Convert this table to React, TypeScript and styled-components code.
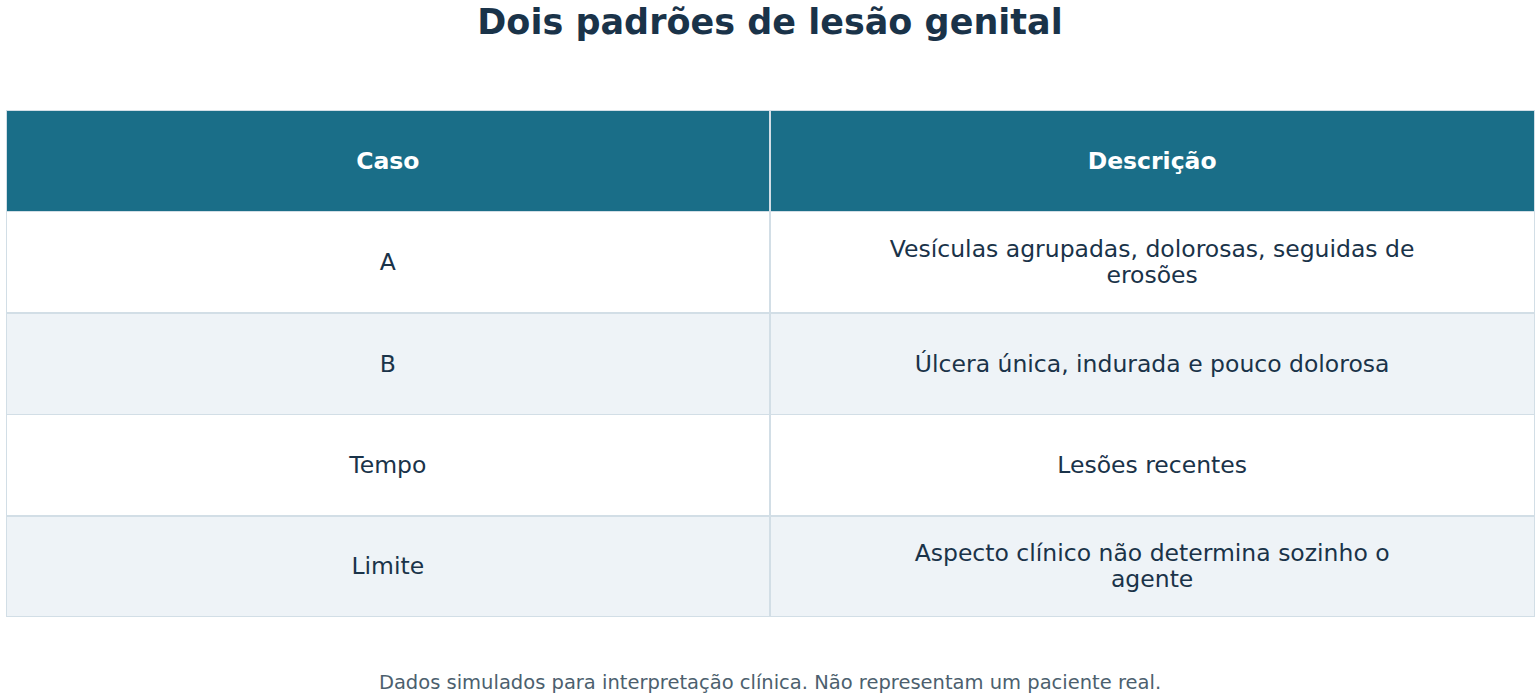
import { Fragment } from "react";
import styled, { createGlobalStyle } from "styled-components";

const GlobalStyle = createGlobalStyle`
  body {
    margin: 0;
    background: #fff;
    font-family: "DejaVu Sans", "Liberation Sans", sans-serif;
  }
`;

const Page = styled.div`
  width: 1540px;
  height: 700px;
  display: flex;
  flex-direction: column;
  align-items: center;
  overflow: hidden;
`;

const Title = styled.h1`
  margin: 2px 0 0;
  font-size: 35px;
  line-height: 40px;
  font-weight: bold;
  color: #1a3349;
`;

const Table = styled.div`
  margin-top: 68px;
  width: 1529px;
  display: grid;
  grid-template-columns: 1fr 1fr;
  grid-auto-rows: 99.8px;
  gap: 1.6px;
  padding: 1px;
  box-sizing: border-box;
  background: #d2dee6;
`;

const HeadCell = styled.div`
  background: #1a6e88;
  color: #fff;
  font-weight: bold;
  font-size: 23.5px;
  display: flex;
  align-items: center;
  justify-content: center;
  text-align: center;
`;

const Cell = styled.div<{ $alt: boolean }>`
  background: ${(p) => (p.$alt ? "#eef3f7" : "#ffffff")};
  color: #1a3349;
  font-size: 23.5px;
  line-height: 26px;
  display: flex;
  align-items: center;
  justify-content: center;
  text-align: center;
`;

const CellText = styled.span`
  max-width: 540px;
`;

const Note = styled.p`
  margin: 54px 0 0;
  font-size: 19.5px;
  color: #4c5f6e;
`;

const rows = [
  ["A", "Vesículas agrupadas, dolorosas, seguidas de erosões"],
  ["B", "Úlcera única, indurada e pouco dolorosa"],
  ["Tempo", "Lesões recentes"],
  ["Limite", "Aspecto clínico não determina sozinho o agente"],
];

export default function App() {
  return (
    <Page>
      <GlobalStyle />
      <Title>Dois padrões de lesão genital</Title>
      <Table>
        <HeadCell>Caso</HeadCell>
        <HeadCell>Descrição</HeadCell>
        {rows.map(([caso, desc], i) => (
          <Fragment key={caso}>
            <Cell $alt={i % 2 === 1}>
              <CellText>{caso}</CellText>
            </Cell>
            <Cell $alt={i % 2 === 1}>
              <CellText>{desc}</CellText>
            </Cell>
          </Fragment>
        ))}
      </Table>
      <Note>
        Dados simulados para interpretação clínica. Não representam um paciente
        real.
      </Note>
    </Page>
  );
}
